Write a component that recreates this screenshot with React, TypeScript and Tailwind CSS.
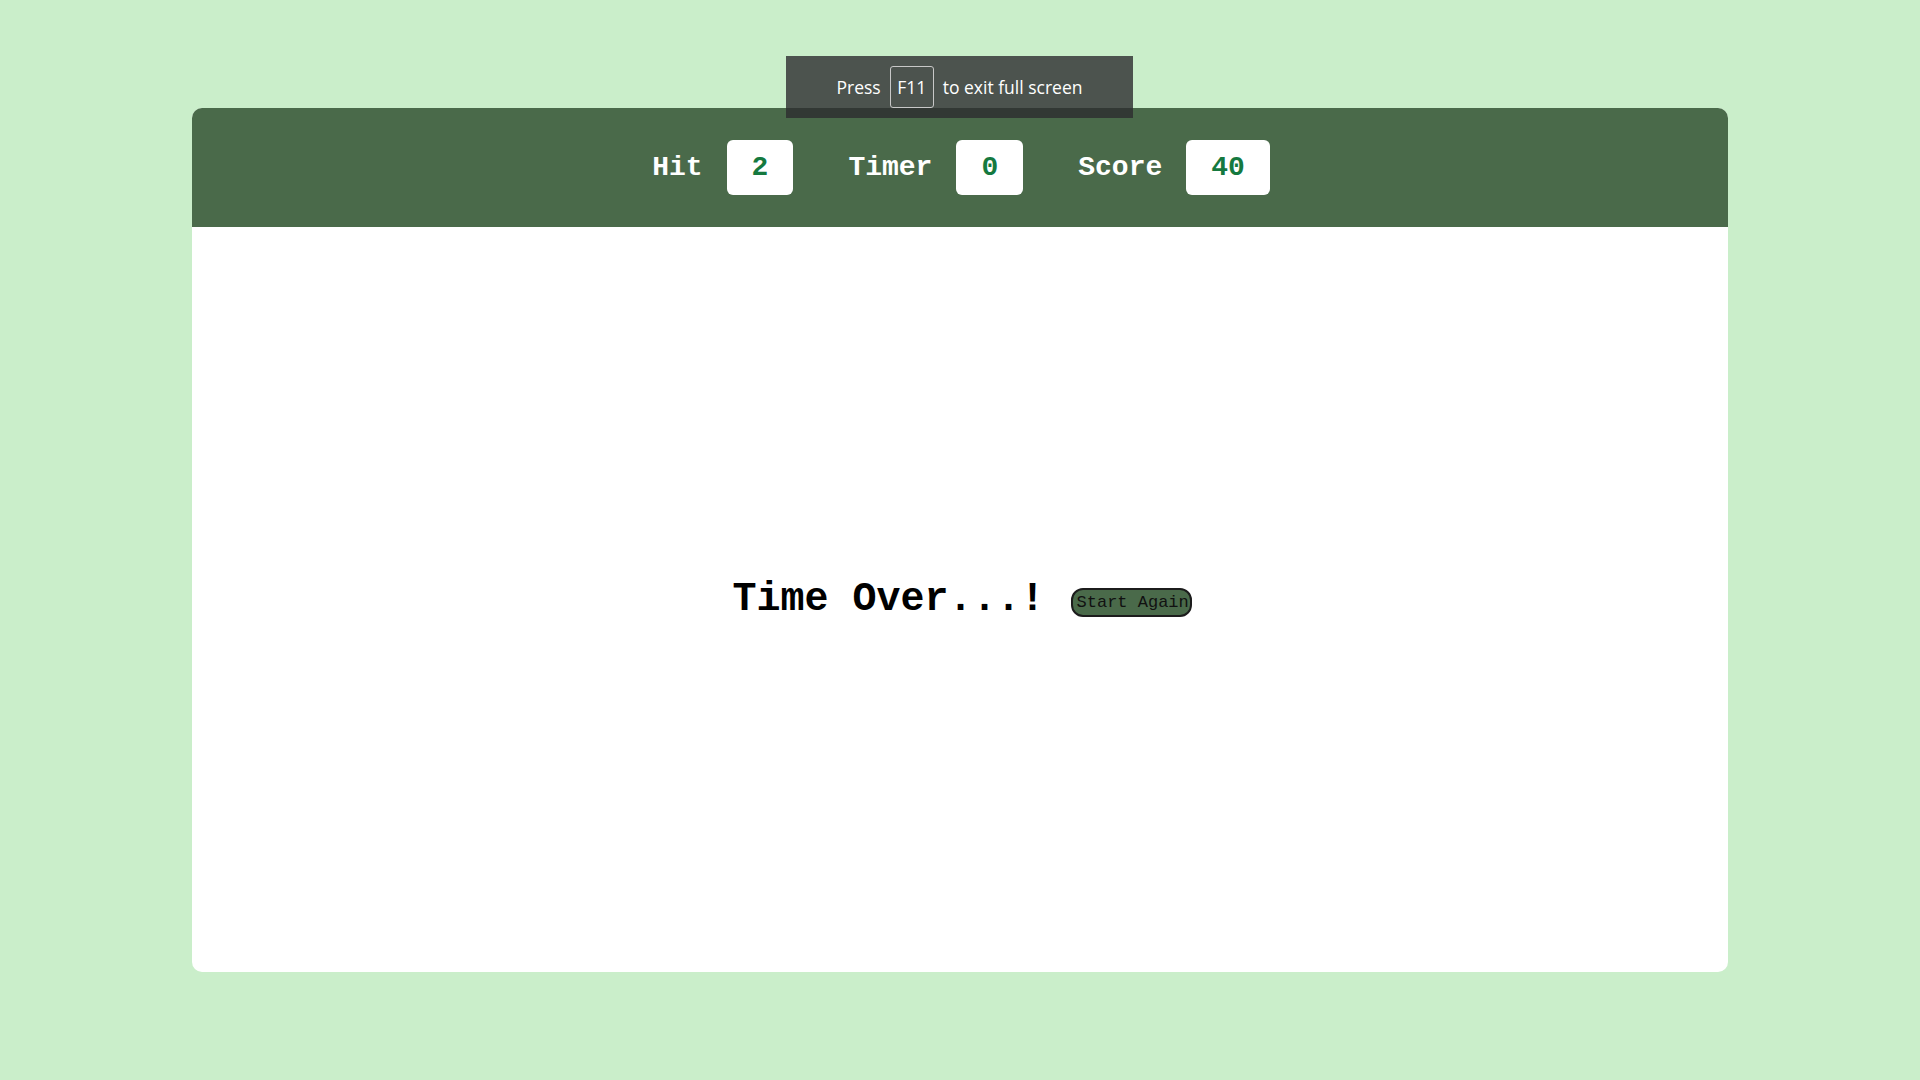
const mono = { fontFamily: '"Liberation Mono", "Courier New", monospace' };

function Stat({ label, value }: { label: string; value: string }) {
  return (
    <div className="flex items-center gap-[24px]">
      <span className="text-[28px] font-bold text-white leading-[32px]">{label}</span>
      <div className="h-[55px] px-[25px] flex items-center bg-white rounded-[6px] text-[28px] font-bold text-[#15793f] leading-[32px]">
        {value}
      </div>
    </div>
  );
}

export default function App() {
  return (
    <div className="relative min-h-screen w-full bg-[#caeeca] flex justify-center pt-[108px]" style={mono}>
      {/* Full screen toast */}
      <div
        className="absolute top-[56px] left-[786px] w-[347px] h-[62px] z-10 bg-[rgba(44,44,46,0.8)] flex items-center justify-center text-white text-[17.5px]"
        style={{ fontFamily: '"Open Sans", "Noto Sans", sans-serif' }}
      >
        <span>Press</span>
        <span className="mx-[9px] h-[42px] w-[44px] border border-[#c8c8c8] rounded-[3px] flex items-center justify-center">F11</span>
        <span>to exit full screen</span>
      </div>

      <div className="w-[1536px] h-[864px] bg-white rounded-[10px] overflow-hidden flex flex-col">
        <header className="h-[119px] bg-[#4a6a4a] flex items-center justify-center gap-[55px] pl-[2px]">
          <Stat label="Hit" value="2" />
          <Stat label="Timer" value="0" />
          <Stat label="Score" value="40" />
        </header>

        <main className="flex-1 flex items-center justify-center pl-[4px]">
          <h1 className="text-[40px] font-bold text-black leading-[45px]">Time Over...!</h1>
          <button className="ml-[26px] mt-[6px] w-[121px] h-[29px] pl-[4px] text-left whitespace-nowrap bg-[#4a6a4a] border-2 border-[#1c1c1c] rounded-[12px] text-[17px] text-[#111] leading-[20px]">
            Start Again
          </button>
        </main>
      </div>
    </div>
  );
}
